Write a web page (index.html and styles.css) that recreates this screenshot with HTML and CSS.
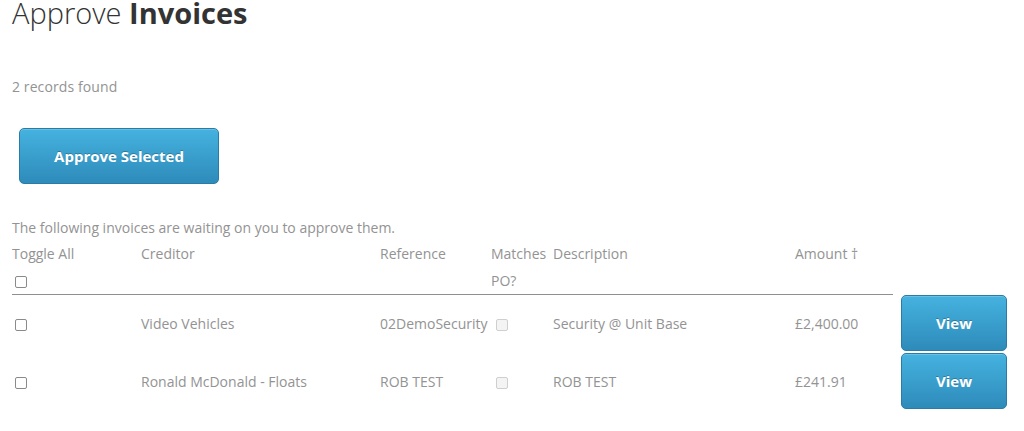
FILE: index.html
```html
<!DOCTYPE html>
<html lang="en">
<head>
    <meta charset="UTF-8">
    <meta name="viewport" content="width=device-width, initial-scale=1.0">
    <title>Approve Invoices</title>
    <link rel="stylesheet" href="styles.css">
</head>
<body>
    <h1 class="page-title">Approve <strong>Invoices</strong></h1>

    <p class="records">2 records found</p>

    <button class="btn btn-approve" type="button">Approve Selected</button>

    <p class="intro">The following invoices are waiting on you to approve them.</p>

    <table class="invoices">
        <thead>
            <tr>
                <th class="col-toggle">Toggle All<br><input type="checkbox"></th>
                <th class="col-creditor">Creditor</th>
                <th class="col-ref">Reference</th>
                <th class="col-po">Matches PO?</th>
                <th class="col-desc">Description</th>
                <th class="col-amount">Amount &#8224;</th>
                <th class="col-action"></th>
            </tr>
        </thead>
        <tbody>
            <tr>
                <td><input type="checkbox"></td>
                <td>Video Vehicles</td>
                <td>02DemoSecurity</td>
                <td><input type="checkbox" disabled></td>
                <td>Security @ Unit Base</td>
                <td>&pound;2,400.00</td>
                <td><button class="btn btn-view" type="button">View</button></td>
            </tr>
            <tr>
                <td><input type="checkbox"></td>
                <td>Ronald McDonald - Floats</td>
                <td>ROB TEST</td>
                <td><input type="checkbox" disabled></td>
                <td>ROB TEST</td>
                <td>&pound;241.91</td>
                <td><button class="btn btn-view" type="button">View</button></td>
            </tr>
        </tbody>
    </table>
</body>
</html>
```

FILE: styles.css
```css
body {
    font-family: 'Open Sans', sans-serif;
    font-size: 14px;
    line-height: 20px;
    color: #939393;
    background-color: #fff;
    margin: 0;
    padding: 0 12px;
}
.page-title {
    font-size: 29px;
    line-height: 26px;
    font-weight: 300;
    color: #333;
    margin: 0;
}
.page-title strong {
    font-weight: 700;
}
.records {
    margin: 51px 0 0;
    letter-spacing: 0.1px;
}
.btn {
    font-family: 'Open Sans', sans-serif;
    font-size: 15px;
    font-weight: 700;
    color: #fff;
    text-shadow: 0 -1px 0 rgba(0, 0, 0, 0.25);
    background: linear-gradient(to bottom, #45b2df, #2e8bba);
    border: 1px solid #2a7ca6;
    border-radius: 5px;
    box-shadow: inset 0 1px 0 rgba(255, 255, 255, 0.2);
    cursor: pointer;
    display: block;
}
.btn-approve {
    width: 200px;
    height: 56px;
    margin: 31px 0 0 7px;
}
.intro {
    margin: 34px 0 0;
}
.invoices {
    width: 1000px;
    margin-top: 2px;
    border-collapse: collapse;
    table-layout: fixed;
}
.invoices th {
    font-weight: 400;
    text-align: left;
    vertical-align: top;
    line-height: 27px;
    padding: 0;
    border-bottom: 1px solid #8f8f8f;
}
.invoices th.col-action {
    border-bottom: none;
}
.invoices td {
    padding: 0;
    height: 58px;
    vertical-align: middle;
    white-space: nowrap;
}
.invoices input[type="checkbox"] {
    appearance: none;
    -webkit-appearance: none;
    width: 12px;
    height: 12px;
    margin: 0 0 0 3px;
    border: 1px solid #8a8a8a;
    border-radius: 2px;
    background-color: #fff;
    vertical-align: middle;
}
.invoices input[type="checkbox"]:disabled {
    border-color: #cfcfcf;
    background-color: #f4f4f4;
    margin-left: 5px;
}
.col-toggle { width: 129px; }
.col-creditor { width: 239px; }
.col-ref { width: 111px; }
.col-po { width: 62px; }
.col-desc { width: 242px; }
.col-amount { width: 98px; }
.btn-view {
    width: 106px;
    height: 56px;
    margin: 0 0 2px 8px;
}
```
